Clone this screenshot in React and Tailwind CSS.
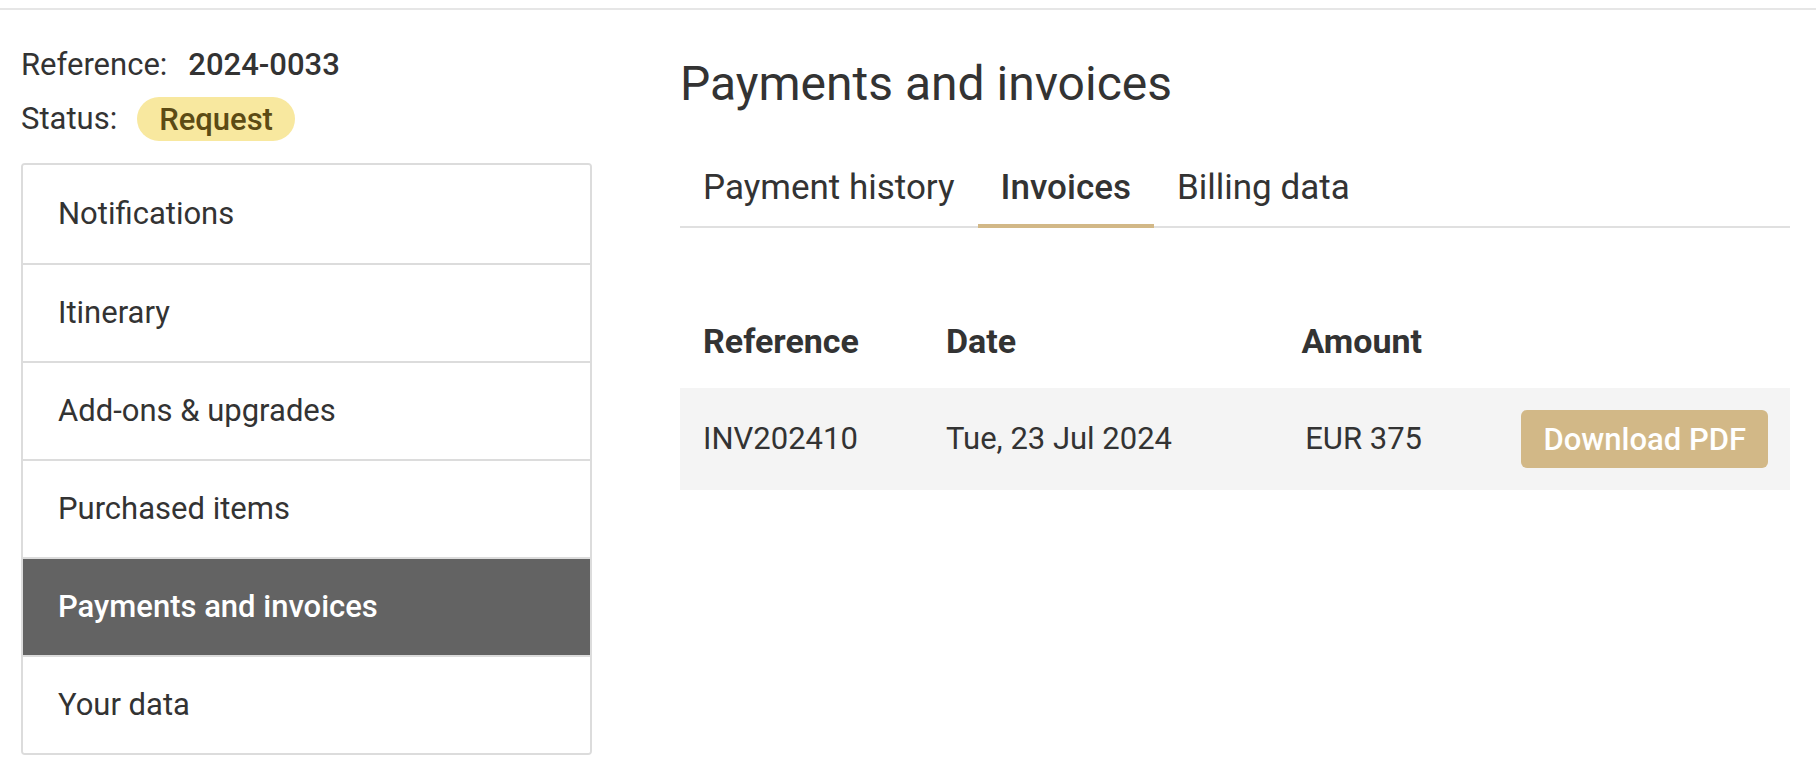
import React from "react";

const navItems = [
  "Notifications",
  "Itinerary",
  "Add-ons & upgrades",
  "Purchased items",
  "Payments and invoices",
  "Your data",
];

export default function App() {
  return (
    <div
      className="w-full min-h-[774px] bg-white text-[#333333]"
      style={{ fontFamily: "Roboto, 'Noto Sans', Arial, sans-serif" }}
    >
      <div className="h-[2px] mt-[8px] bg-[#e6e6e6]" />
      <div className="flex pl-[21px] pr-[26px]">
        {/* Left column */}
        <div className="w-[571px] shrink-0 pt-[35px]">
          <div className="flex items-center h-[40px] text-[31px] leading-[40px]">
            <span>Reference:</span>
            <span className="ml-[21px] font-medium">2024-0033</span>
          </div>
          <div className="flex items-center h-[44px] mt-[12px] text-[31px]">
            <span>Status:</span>
            <span className="ml-[20px] h-[44px] px-[22px] rounded-full bg-[#f8e89f] text-[#5c4b14] font-medium flex items-center leading-none">
              Request
            </span>
          </div>
          <div className="mt-[22px] border-2 border-[#dcdcdc] rounded-[4px] overflow-hidden">
            {navItems.map((item, i) => {
              const active = item === "Payments and invoices";
              return (
                <div
                  key={item}
                  className={
                    "h-[98px] flex items-center pl-[35px] text-[31px] " +
                    (i > 0 ? "border-t-2 border-[#dcdcdc] " : "") +
                    (active ? "bg-[#636363] text-white font-medium" : "bg-white")
                  }
                >
                  {item}
                </div>
              );
            })}
          </div>
        </div>

        {/* Main column */}
        <div className="flex-1 ml-[88px] pt-[46px]">
          <h1 className="text-[48px] leading-[56px] font-normal">Payments and invoices</h1>
          <div className="mt-[40px] flex border-b-2 border-[#e0e0e0]">
            <div className="px-[23px] pt-[16px] pb-[16px] text-[35px] leading-[40px] border-b-4 border-transparent -mb-[2px]">
              Payment history
            </div>
            <div className="px-[23px] pt-[16px] pb-[16px] text-[35px] leading-[40px] font-medium border-b-4 border-[#d2b887] -mb-[2px]">
              Invoices
            </div>
            <div className="px-[23px] pt-[16px] pb-[16px] text-[35px] leading-[40px] border-b-4 border-transparent -mb-[2px]">
              Billing data
            </div>
          </div>

          <div className="mt-[66px]">
            <div className="flex items-center h-[94px] text-[34px] font-bold leading-[40px]">
              <div className="w-[243px] pl-[23px]">Reference</div>
              <div className="flex-1 pl-[23px]">Date</div>
              <div className="w-[185px] pr-[23px] text-right">Amount</div>
              <div className="w-[345px]" />
            </div>
            <div className="flex items-center h-[102px] bg-[#f4f4f4] text-[31px] leading-[40px]">
              <div className="w-[243px] pl-[23px]">INV202410</div>
              <div className="flex-1 pl-[23px]">Tue, 23 Jul 2024</div>
              <div className="w-[185px] pr-[23px] text-right">EUR 375</div>
              <div className="w-[345px] flex justify-end pr-[22px]">
                <button className="h-[58px] px-[22px] rounded-[6px] bg-[#d2b887] text-white font-medium text-[31px] leading-none">
                  Download PDF
                </button>
              </div>
            </div>
          </div>
        </div>
      </div>
    </div>
  );
}
